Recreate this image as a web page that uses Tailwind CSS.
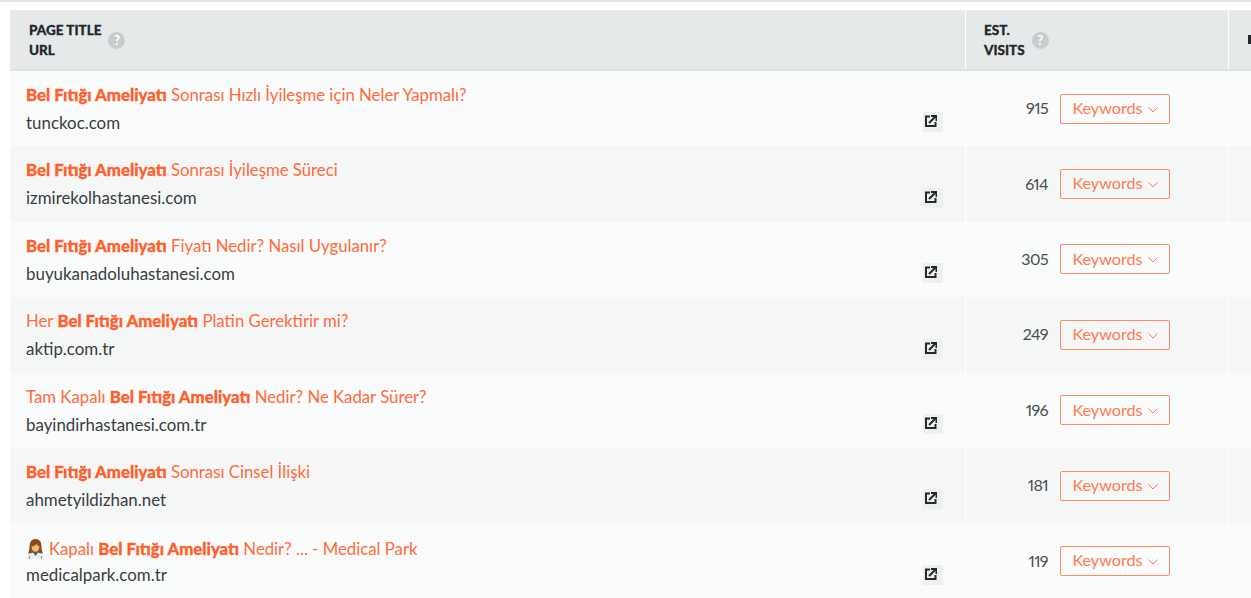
<!DOCTYPE html>
<html lang="en">

<head>
  <meta charset="UTF-8" />
  <title>Top pages</title>
  <script src="https://cdn.jsdelivr.net/npm/@tailwindcss/browser@4"></script>
</head>

<body class="bg-white h-screen overflow-hidden font-['Lato','Open_Sans',sans-serif]">

  <div class="h-[2px] bg-[#e4e6e7]"></div>

  <div class="pl-[10px] pt-[8px]">

    <!-- header -->
    <div class="flex h-[61px] bg-[#e6e9ea] border-b-2 border-[#dfe2e3] text-[#24272a] text-[13.5px] leading-[20px] font-black [-webkit-text-stroke:0.3px_#24272a]">
      <div class="w-[955px] flex items-center pl-[19px] gap-[7px]">
        <div>PAGE TITLE<br />URL</div>
        <span class="w-[17px] h-[17px] mt-[1px] rounded-full bg-[#c9cccd] text-white text-[13px] leading-[17px] text-center font-bold [-webkit-text-stroke:0]">?</span>
      </div>
      <div class="w-[264px] flex items-center pl-[18px] gap-[7px] border-x border-white">
        <div>EST.<br />VISITS</div>
        <span class="w-[17px] h-[17px] mt-[1px] rounded-full bg-[#c9cccd] text-white text-[13px] leading-[17px] text-center font-bold [-webkit-text-stroke:0]">?</span>
      </div>
      <div class="flex-1 flex items-center pl-[19px]">
        <span class="w-[3px] h-[9px] bg-[#24272a]"></span>
      </div>
    </div>

    <div id="rows"></div>
  </div>

  <script>
    const rows = [
      { pre: "", title: "Sonrası Hızlı İyileşme için Neler Yapmalı?", url: "tunckoc.com", visits: 915 },
      { pre: "", title: "Sonrası İyileşme Süreci", url: "izmirekolhastanesi.com", visits: 614 },
      { pre: "", title: "Fiyatı Nedir? Nasıl Uygulanır?", url: "buyukanadoluhastanesi.com", visits: 305 },
      { pre: "Her ", title: "Platin Gerektirir mi?", url: "aktip.com.tr", visits: 249 },
      { pre: "Tam Kapalı ", title: "Nedir? Ne Kadar Sürer?", url: "bayindirhastanesi.com.tr", visits: 196 },
      { pre: "", title: "Sonrası Cinsel İlişki", url: "ahmetyildizhan.net", visits: 181 },
      { pre: "Kapalı ", title: "Nedir? ... - Medical Park", url: "medicalpark.com.tr", visits: 119, emoji: true },
    ];

    // woman health worker emoji, drawn because no emoji font is installed
    const emoji = `<svg class="inline-block w-[19px] h-[20px] mr-[4px] align-[-4px]" viewBox="0 0 19 20">
      <path d="M9.500 0C5.500 0 3.500 3 3.500 7.500c0 3-.8 5.500-1.500 7h15c-.7-1.500-1.500-4-1.500-7C15.500 3 13.500 0 9.500 0z" fill="#8a4b1f"/>
      <path d="M1 20c0-4 3-6.500 8.500-6.500S18 16 18 20z" fill="#e9edef"/>
      <path d="M7 13.500 9.500 17 12 13.500l-1-1H8z" fill="#46606e"/>
      <path d="M3.500 20v-3M15.500 20v-3" stroke="#8a9aa3" stroke-width="1"/>
      <ellipse cx="9.500" cy="8" rx="3.900" ry="4.800" fill="#f4b76e"/>
      <path d="M5.500 7.500c2 0 4-1 5-2.800C11.500 6.500 12.500 7.500 13.500 7.500c0-3-1.500-5-4-5s-4 2-4 5z" fill="#8a4b1f"/>
    </svg>`;

    document.getElementById("rows").innerHTML = rows.map((r, i) => `
      <div class="flex h-[75.4px] ${i % 2 ? "bg-[#f5f7f7]" : "bg-[#fafbfb]"}">
        <div class="w-[955px] relative pl-[16px] pt-[13px]">
          <div class="h-[22px] ${r.emoji ? "pt-[2px]" : ""} text-[16.75px] leading-[22px] text-[#ff6b3d] whitespace-nowrap">
            ${r.emoji ? emoji : ""}${r.pre}<b class="font-black text-[#ff5f2e] [-webkit-text-stroke:0.3px_#ff5f2e]">Bel Fıtığı Ameliyatı</b> ${r.title}
          </div>
          <div class="mt-[6px] text-[16.9px] leading-[22px] text-[#3a3e41]">${r.url}</div>
          <a class="absolute right-[22px] bottom-[14px] w-[20px] h-[20px] pl-[2px] pt-[3px] bg-[#eeefef]">
            <svg class="w-[12px] h-[12px]" viewBox="0 0 12 12" fill="none" stroke="#26292c" stroke-width="2">
              <path d="M5 1.500H1v9.500h9.500V7" />
              <path d="M4 8 10.500 1.500M6 1h5.500v5" />
            </svg>
          </a>
        </div>
        <div class="w-[264px] flex items-center border-x border-white">
          <span class="w-[82px] pb-[1px] text-right text-[16px] tracking-[-0.6px] proportional-nums text-[#4a4e51]">${r.visits}</span>
          <button class="ml-[12px] w-[110px] h-[30px] pb-[1px] border border-[#ff8a66] rounded-[2px] flex items-center justify-center gap-[5px] text-[16.2px] text-[#ff7a50]">
            Keywords
            <svg class="w-[10px] h-[6px] mt-[3px]" viewBox="0 0 10 6" fill="none" stroke="#ff7a50" stroke-width="1">
              <path d="M.5.500 5 5 9.500.500" />
            </svg>
          </button>
        </div>
        <div class="flex-1"></div>
      </div>`).join("");
  </script>

</body>

</html>
